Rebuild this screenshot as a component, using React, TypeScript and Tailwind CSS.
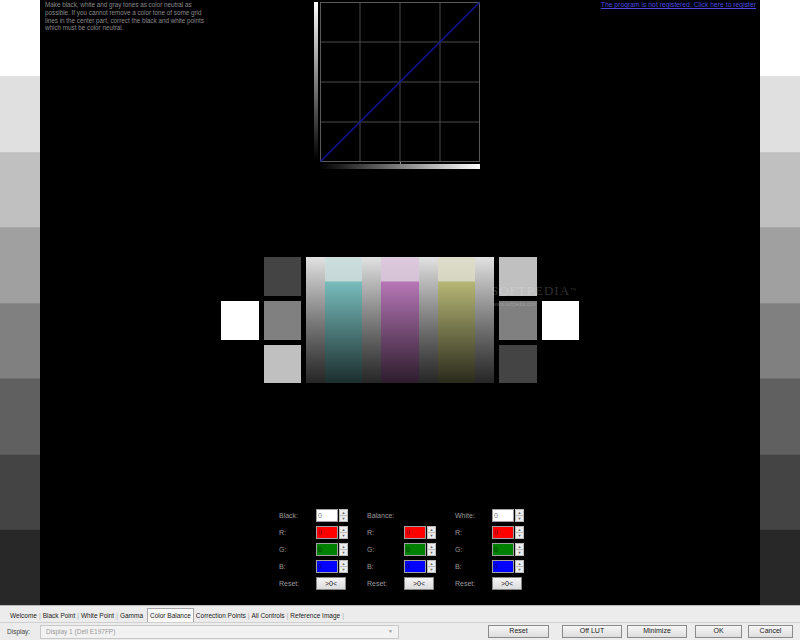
import React from "react";

const FONT = { fontFamily: '"Liberation Sans", Arial, sans-serif' };

const bars = ["#ffffff", "#e0e0e0", "#c0c0c0", "#a0a0a0", "#808080", "#606060", "#444444", "#282828"];

function SideBars() {
  return (
    <div className="flex w-[40px] flex-col">
      {bars.map((c, i) => (
        <div
          key={i}
          className={i === 0 ? "h-[76px]" : "h-[75.6px] border-t border-white/10"}
          style={{ backgroundColor: c }}
        />
      ))}
    </div>
  );
}

function CurveChart() {
  return (
    <svg width="180" height="172" viewBox="0 0 180 172" className="block">
      <defs>
        <linearGradient id="vbar" x1="0" y1="0" x2="0" y2="1">
          <stop offset="0" stopColor="#ffffff" />
          <stop offset="1" stopColor="#000000" />
        </linearGradient>
        <linearGradient id="hbar" x1="0" y1="0" x2="1" y2="0">
          <stop offset="0" stopColor="#000000" />
          <stop offset="1" stopColor="#ffffff" />
        </linearGradient>
      </defs>
      <rect x="4" y="2" width="4" height="158" fill="url(#vbar)" />
      <rect x="10" y="164" width="160" height="5" fill="url(#hbar)" />
      <rect x="90" y="162" width="1" height="2" fill="#888" />
      {[50, 90, 130].map((x) => (
        <line key={"v" + x} x1={x} y1="2" x2={x} y2="162" stroke="#4a4a4a" strokeWidth="1" />
      ))}
      {[42, 82, 122].map((y) => (
        <line key={"h" + y} x1="10" y1={y} x2="170" y2={y} stroke="#4a4a4a" strokeWidth="1" />
      ))}
      <rect x="10.5" y="2.5" width="159" height="159" fill="none" stroke="#5a5a5a" strokeWidth="1" />
      <line x1="10.5" y1="161.5" x2="169.5" y2="2.5" stroke="#14149a" strokeWidth="1.5" />
    </svg>
  );
}

function Stripe({ top, from, to }: { top: string; from: string; to: string }) {
  return (
    <div
      className="h-full"
      style={{
        background: `linear-gradient(to bottom, ${top} 0px, ${top} 24px, ${from} 25px, ${to} 100%)`,
      }}
    />
  );
}

function Pattern() {
  return (
    <div className="flex items-center justify-center gap-[5px]">
      <div className="h-[39px] w-[38px] bg-white" />
      <div className="flex w-[37px] flex-col gap-[5px]">
        <div className="h-[39px] bg-[#444444]" />
        <div className="h-[39px] bg-[#808080]" />
        <div className="h-[38px] bg-[#c0c0c0]" />
      </div>
      <div className="relative h-[126px] w-[188px] bg-gradient-to-b from-[#e2e2e2] to-[#262626]">
        <div className="grid h-full grid-cols-[19px_37px_19px_38px_19px_37px_19px]">
          <div />
          <Stripe top="rgba(200,222,222,0.8)" from="#78bcbc" to="#1c2e2e" />
          <div />
          <Stripe top="rgba(220,196,220,0.8)" from="#b676b6" to="#2c1c2c" />
          <div />
          <Stripe top="rgba(220,220,196,0.8)" from="#b6b676" to="#2a2a1c" />
          <div />
        </div>
        <div className="absolute left-[185px] top-[24px] whitespace-nowrap text-[13px] tracking-[1px] text-white/20" style={{ fontFamily: '"Liberation Serif", serif' }}>
          SOFTPEDIA<sup className="text-[6px]">™</sup>
        </div>
        <div className="absolute left-[187px] top-[44px] whitespace-nowrap text-[5px] text-white/25" style={FONT}>
          www.softpedia.com
        </div>
      </div>
      <div className="flex w-[38px] flex-col gap-[5px]">
        <div className="h-[39px] bg-[#c0c0c0]" />
        <div className="h-[39px] bg-[#808080]" />
        <div className="h-[38px] bg-[#444444]" />
      </div>
      <div className="h-[39px] w-[37px] bg-white" />
    </div>
  );
}

function Spin({ fill, ink }: { fill: string; ink: string }) {
  return (
    <div className="flex h-[13px] w-[32px]">
      <div
        className="flex h-full w-[22px] items-center border border-[#a0a0a0] pl-[1px] text-[7px] leading-none"
        style={{ backgroundColor: fill, color: ink }}
      >
        0
      </div>
      <div className="ml-[1px] flex w-[9px] flex-col border border-[#bbb] bg-[#ececec]">
        <div className="flex flex-1 items-center justify-center border-b border-[#bbb] text-[4px] leading-none text-[#666]">▲</div>
        <div className="flex flex-1 items-center justify-center text-[4px] leading-none text-[#666]">▼</div>
      </div>
    </div>
  );
}

function ResetBtn() {
  return (
    <div className="flex h-[13px] w-[30px] items-center justify-center border border-[#888] bg-gradient-to-b from-[#f4f4f4] to-[#dcdcdc] text-[7px] leading-none text-[#222]">
      &gt;0&lt;
    </div>
  );
}

function ControlColumn({ title, hasTop }: { title: string; hasTop: boolean }) {
  const rows: [string, React.ReactNode][] = [
    [title, hasTop ? <Spin fill="#ffffff" ink="#777" /> : <div className="h-[13px]" />],
    ["R:", <Spin fill="#ff0000" ink="#700000" />],
    ["G:", <Spin fill="#008000" ink="#003000" />],
    ["B:", <Spin fill="#0000ff" ink="#000070" />],
    ["Reset:", <ResetBtn />],
  ];
  return (
    <div className="flex w-[88px] flex-col gap-[4px]">
      {rows.map(([label, ctrl], i) => (
        <div key={i} className="flex items-center">
          <div className="w-[37px] text-[7px] leading-none text-[#9a9a9a]">{label}</div>
          {ctrl}
        </div>
      ))}
    </div>
  );
}

const tabs = ["Welcome", "Black Point", "White Point", "Gamma", "Color Balance", "Correction Points", "All Controls", "Reference Image"];

function BottomBar() {
  return (
    <div className="flex h-[35px] flex-col border-t border-[#b8b8b8] bg-[#ececec] text-[6.5px] text-[#222]">
      <div className="flex h-[16px] items-end pl-[8px]">
        {tabs.map((t, i) =>
          t === "Color Balance" ? (
            <div key={t} className="ml-[2px] flex h-[14px] items-center border border-b-0 border-[#a8a8a8] bg-[#fafafa] px-[2px]">
              {t}
            </div>
          ) : (
            <div key={t} className="flex h-[13px] items-center">
              <span className="px-[2px]">{t}</span>
              {tabs[i + 1] !== "Color Balance" && <span className="text-[#aaa]">|</span>}
            </div>
          ),
        )}
      </div>
      <div className="flex flex-1 items-center border-t border-[#d0d0d0] pl-[7px] pr-[7px]">
        <div className="w-[33px] text-[#444]">Display:</div>
        <div className="flex h-[14px] w-[359px] items-center justify-between border border-[#c8c8c8] bg-[#f2f2f2] px-[5px] text-[#999]">
          <span>Display 1 (Dell E197FP)</span>
          <span className="text-[5px] text-[#999]">▼</span>
        </div>
        <div className="ml-auto flex items-center text-[7px]">
          {[
            ["Reset", "w-[61px] mr-[13px]"],
            ["Off LUT", "w-[60px] mr-[5px]"],
            ["Minimize", "w-[60px] mr-[8px]"],
            ["OK", "w-[47px] mr-[6px]"],
            ["Cancel", "w-[45px]"],
          ].map(([b, cls]) => (
            <div
              key={b}
              className={`${cls} flex h-[13px] items-center justify-center border border-[#8a8a8a] bg-gradient-to-b from-[#f6f6f6] to-[#dedede] text-[#222]`}
            >
              {b}
            </div>
          ))}
        </div>
      </div>
    </div>
  );
}

export default function App() {
  return (
    <div className="flex h-[640px] w-[800px] flex-col overflow-hidden bg-black" style={FONT}>
      <div className="flex h-[605px]">
        <SideBars />
        <div className="flex flex-1 flex-col bg-black">
          <div className="grid grid-cols-[1fr_180px_1fr]">
            <div className="pl-[5px] pt-[1px] text-[6.3px] leading-[7.8px] text-[#8a8a8a]">
              Make black, white and gray tones as color neutral as
              <br />
              possible. If you cannot remove a color tone of some grid
              <br />
              lines in the center part, correct the black and white points
              <br />
              which must be color neutral.
            </div>
            <CurveChart />
            <div className="pr-[4px] pt-[1px] text-right text-[6.8px] leading-[8px] text-[#4a4ae0] underline">
              The program is not registered. Click here to register
            </div>
          </div>
          <div className="mt-[85px]">
            <Pattern />
          </div>
          <div className="ml-[239px] mt-[126px] flex">
            <ControlColumn title="Black:" hasTop />
            <ControlColumn title="Balance:" hasTop={false} />
            <ControlColumn title="White:" hasTop />
          </div>
        </div>
        <SideBars />
      </div>
      <BottomBar />
    </div>
  );
}
